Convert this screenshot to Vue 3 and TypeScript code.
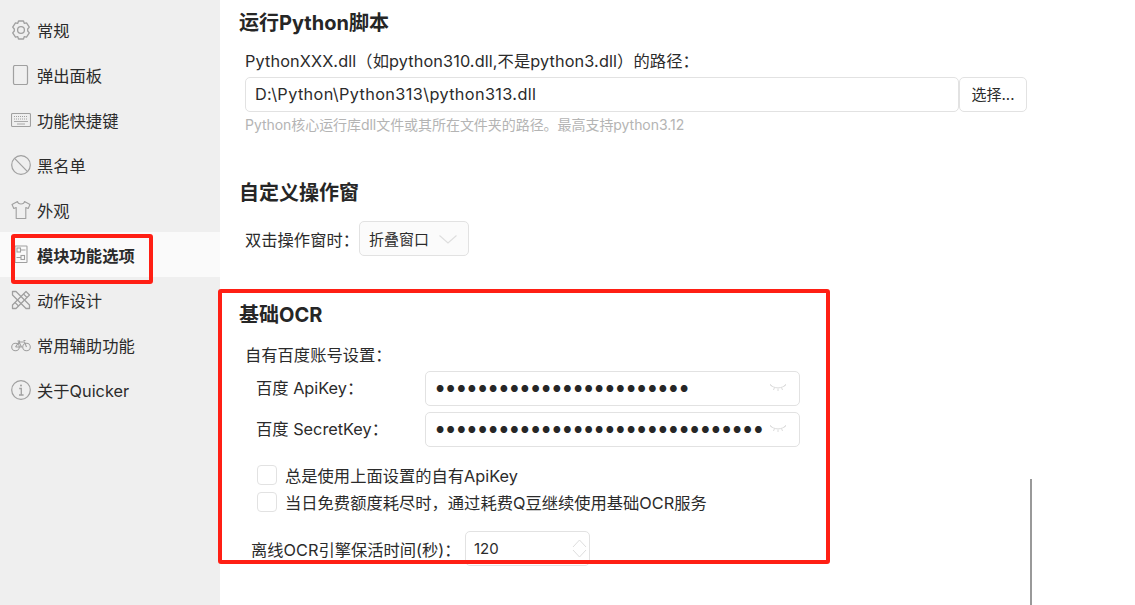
<script setup lang="ts">
const navItems = [
  { key: 'gear', label: '常规' },
  { key: 'tablet', label: '弹出面板' },
  { key: 'keyboard', label: '功能快捷键' },
  { key: 'ban', label: '黑名单' },
  { key: 'shirt', label: '外观' },
  { key: 'sliders', label: '模块功能选项', active: true },
  { key: 'tools', label: '动作设计' },
  { key: 'bike', label: '常用辅助功能' },
  { key: 'info', label: '关于Quicker' },
]
const dots = (n: number) => '●'.repeat(n)
</script>

<template>
  <div class="app">
    <aside class="sidebar">
      <div v-for="item in navItems" :key="item.key" class="nav" :class="{ active: item.active }">
        <svg class="ico" viewBox="0 0 20 20" fill="none" stroke="#a0a0a0" stroke-width="1.1">
          <template v-if="item.key === 'gear'">
            <path d="M7.500 1h5l.7 2.300 2.300-.5 2.800 4.300-1.600 1.900v2l1.600 1.900-2.800 4.300-2.300-.5-.7 2.300h-5l-.7-2.300-2.300.5-2.800-4.300 1.600-1.900V9L1.700 7.100l2.800-4.300 2.300.5z" stroke-linejoin="round" stroke-width="1.300" />
            <circle cx="10" cy="10" r="3.400" stroke-width="1.300" />
          </template>
          <rect v-else-if="item.key === 'tablet'" x="2.500" y="0.500" width="14" height="19" rx="1.500" stroke-width="1.200" />
          <template v-else-if="item.key === 'keyboard'">
            <rect x="0.500" y="3.500" width="19" height="13" rx="1" />
            <path d="M3 6.500h14M3 9h14" stroke-dasharray="1 1" />
            <path d="M3 11.500h14M6 14h8" stroke-width="0.900" />
          </template>
          <template v-else-if="item.key === 'ban'">
            <circle cx="10" cy="10" r="9.300" stroke-width="1.200" />
            <path d="M3.600 3.400 16.500 16.600" stroke-width="1.200" />
          </template>
          <path v-else-if="item.key === 'shirt'" d="M6.500 1.500 1 4.500l1.800 4 2.400-1v11h9.600v-11l2.400 1 1.800-4-5.500-3c-.5 3.400-6.500 3.400-7 0z" stroke-linejoin="round" />
          <template v-else-if="item.key === 'sliders'">
            <rect x="4" y="1" width="12" height="16.500" rx="0.500" />
            <rect x="6" y="3" width="3.500" height="4" />
            <rect x="10" y="10.500" width="3.500" height="4" />
            <path d="M9.500 5H14.500M5.500 12.500H10" />
          </template>
          <template v-else-if="item.key === 'tools'">
            <path d="M1.500 15 15 1.500 18.500 5 5 18.500H1.500z" stroke-linejoin="round" stroke-width="1.300" />
            <path d="M1.500 5V1.500H5L18.500 15v3.500H15z" stroke-linejoin="round" stroke-width="1.300" />
            <path d="M12.500 4 16 7.500M4 12.500 7.500 16" />
          </template>
          <template v-else-if="item.key === 'bike'">
            <circle cx="4.500" cy="12" r="3.800" />
            <circle cx="15.500" cy="12" r="3.800" />
            <path d="M4.500 12 8 7h5.500l2 5M8 7l2.500 5h-6M6.500 6H9M12.500 5.500h2" />
          </template>
          <template v-else>
            <circle cx="10" cy="10" r="9.300" stroke-width="1.200" />
            <path d="M8.200 8.500H10.300V14.800M8 15h4.600" stroke-width="1.300" />
            <circle cx="10" cy="5.600" r="1" fill="#a0a0a0" stroke="none" />
          </template>
        </svg>
        <span>{{ item.label }}</span>
      </div>
    </aside>

    <main class="content">
      <section class="python">
        <h2>运行Python脚本</h2>
        <div class="body">
          <div class="label py-label">PythonXXX.dll（如python310.dll,不是python3.dll）的路径：</div>
          <div class="path-row">
            <div class="box path-input">D:\Python\Python313\python313.dll</div>
            <div class="box choose">选择...</div>
          </div>
          <div class="hint">Python核心运行库dll文件或其所在文件夹的路径。最高支持python3.12</div>
        </div>
      </section>

      <section class="window">
        <h2>自定义操作窗</h2>
        <div class="body dbl">
          <span class="dbl-label">双击操作窗时：</span>
          <div class="box select">
            <span>折叠窗口</span>
            <svg width="20" height="10" viewBox="0 0 20 10" fill="none" stroke="#dedede" stroke-width="1.100"><path d="M1.500 1.500 10 9l8.500-7.500" /></svg>
          </div>
        </div>
      </section>

      <section class="ocr">
        <h2>基础OCR</h2>
        <div class="body">
          <div class="label acct">自有百度账号设置：</div>
          <div class="key-row">
            <span class="key-label">百度 ApiKey：</span>
            <div class="box key">
              <span class="dots">{{ dots(24) }}</span>
              <svg class="eye" width="18" height="10" viewBox="0 0 18 10" fill="none" stroke="#dcdcdc" stroke-width="1"><path d="M1 1.500c4 4.500 12 4.500 16 0M1 1.500 3 3M17 1.500 15 3M5.500 4.500 4.500 7M9 5.500V8M12.500 4.500l1 2.500" /></svg>
            </div>
          </div>
          <div class="key-row">
            <span class="key-label">百度 SecretKey：</span>
            <div class="box key">
              <span class="dots">{{ dots(31) }}</span>
              <svg class="eye" width="18" height="10" viewBox="0 0 18 10" fill="none" stroke="#dcdcdc" stroke-width="1"><path d="M1 1.500c4 4.500 12 4.500 16 0M1 1.500 3 3M17 1.500 15 3M5.500 4.500 4.500 7M9 5.500V8M12.500 4.500l1 2.500" /></svg>
            </div>
          </div>
          <div class="check first"><i class="cb"></i><span>总是使用上面设置的自有ApiKey</span></div>
          <div class="check"><i class="cb"></i><span>当日免费额度耗尽时，通过耗费Q豆继续使用基础OCR服务</span></div>
          <div class="keep">
            <span class="keep-label">离线OCR引擎保活时间(秒)：</span>
            <div class="box num">
              <span>120</span>
              <svg class="spin" width="15" height="19" viewBox="0 0 15 19" fill="none" stroke="#dedede" stroke-width="1"><path d="M1 8 7.500 1 14 8M1 11l6.500 7 6.500-7" /></svg>
            </div>
          </div>
        </div>
      </section>
    </main>

    <div class="scrollbar"></div>
    <div class="mark mark-nav"></div>
    <div class="mark mark-ocr"></div>
  </div>
</template>

<style>
html, body { margin: 0; background: #fff; overflow: hidden; }
</style>

<style scoped>
.app {
  position: relative;
  display: flex;
  width: 1135px;
  height: 605px;
  overflow: hidden;
  background: #fff;
  color: #2b2b2b;
  font-family: "Inter", "Noto Sans CJK SC", sans-serif;
  font-size: 16.300px;
}
.sidebar {
  flex: none;
  width: 220px;
  padding-top: 7px;
  background: #efefef;
}
.nav {
  display: flex;
  align-items: center;
  gap: 6px;
  height: 45px;
  padding-left: 11px;
  box-sizing: border-box;
}
.nav.active { background: #fafafa; font-weight: 700; }
.ico { flex: none; width: 20px; height: 20px; }
.content { flex: none; width: 808px; padding-left: 19px; }
h2 { margin: 0; font-size: 20px; line-height: 26px; font-weight: 700; color: #262626; }
.body { padding-left: 6px; }
.python { padding-top: 10px; }
.py-label { margin-top: 13px; line-height: 24px; white-space: nowrap; letter-spacing: 0.100px; }
.box {
  box-sizing: border-box;
  border: 1px solid #e2e2e2;
  border-radius: 5px;
  background: #fff;
}
.path-row { display: flex; margin-top: 4px; }
.path-input { width: 714px; height: 35px; line-height: 33px; padding-left: 9px; letter-spacing: 0.360px; }
.choose { width: 68px; height: 35px; line-height: 33px; text-align: center; font-size: 15px; }
.hint { margin-top: 3px; line-height: 20px; font-size: 14px; letter-spacing: -0.050px; color: #b4b4b4; white-space: nowrap; }
.window { padding-top: 45px; }
.dbl { display: flex; align-items: center; margin-top: 15px; }
.dbl-label { width: 114px; flex: none; }
.select {
  display: flex;
  align-items: center;
  justify-content: space-between;
  width: 110px;
  height: 35px;
  padding: 0 10px 0 9px;
  background: #fbfbfb;
  font-size: 15px;
}
.ocr { padding-top: 46px; }
.acct { margin-top: 16px; line-height: 22px; }
.key-row { display: flex; align-items: center; margin-top: 6px; padding-left: 11px; }
.acct + .key-row { margin-top: 5px; }
.key-label { width: 169px; flex: none; margin-top: -4px; }
.key {
  position: relative;
  display: flex;
  align-items: center;
  justify-content: space-between;
  width: 375px;
  height: 35px;
  padding: 0 12px 0 10px;
}
.dots { font-size: 9px; letter-spacing: 2.380px; color: #262626; white-space: nowrap; }
.eye { flex: none; margin-top: -1px; }
.check { display: flex; align-items: center; gap: 8px; padding-left: 12px; height: 20px; margin-top: 7px; }
.check.first { margin-top: 18px; }
.cb { display: block; flex: none; width: 20px; height: 20px; box-sizing: border-box; border: 1px solid #e2e2e2; border-radius: 4px; }
.keep { display: flex; align-items: center; padding-left: 6px; margin-top: 19px; }
.keep-label { width: 214px; flex: none; white-space: nowrap; }
.num {
  display: flex;
  align-items: center;
  justify-content: space-between;
  width: 125px;
  height: 35px;
  padding: 0 2px 0 8px;
  font-size: 15px;
}
.scrollbar { position: absolute; left: 1030px; top: 479px; width: 2px; height: 126px; background: #999; }
.mark { position: absolute; box-sizing: border-box; border: 4px solid #ff1f14; border-radius: 3px; }
.mark-nav { left: 11px; top: 234px; width: 142px; height: 50px; }
.mark-ocr { left: 218px; top: 289px; width: 612px; height: 275px; }
</style>
